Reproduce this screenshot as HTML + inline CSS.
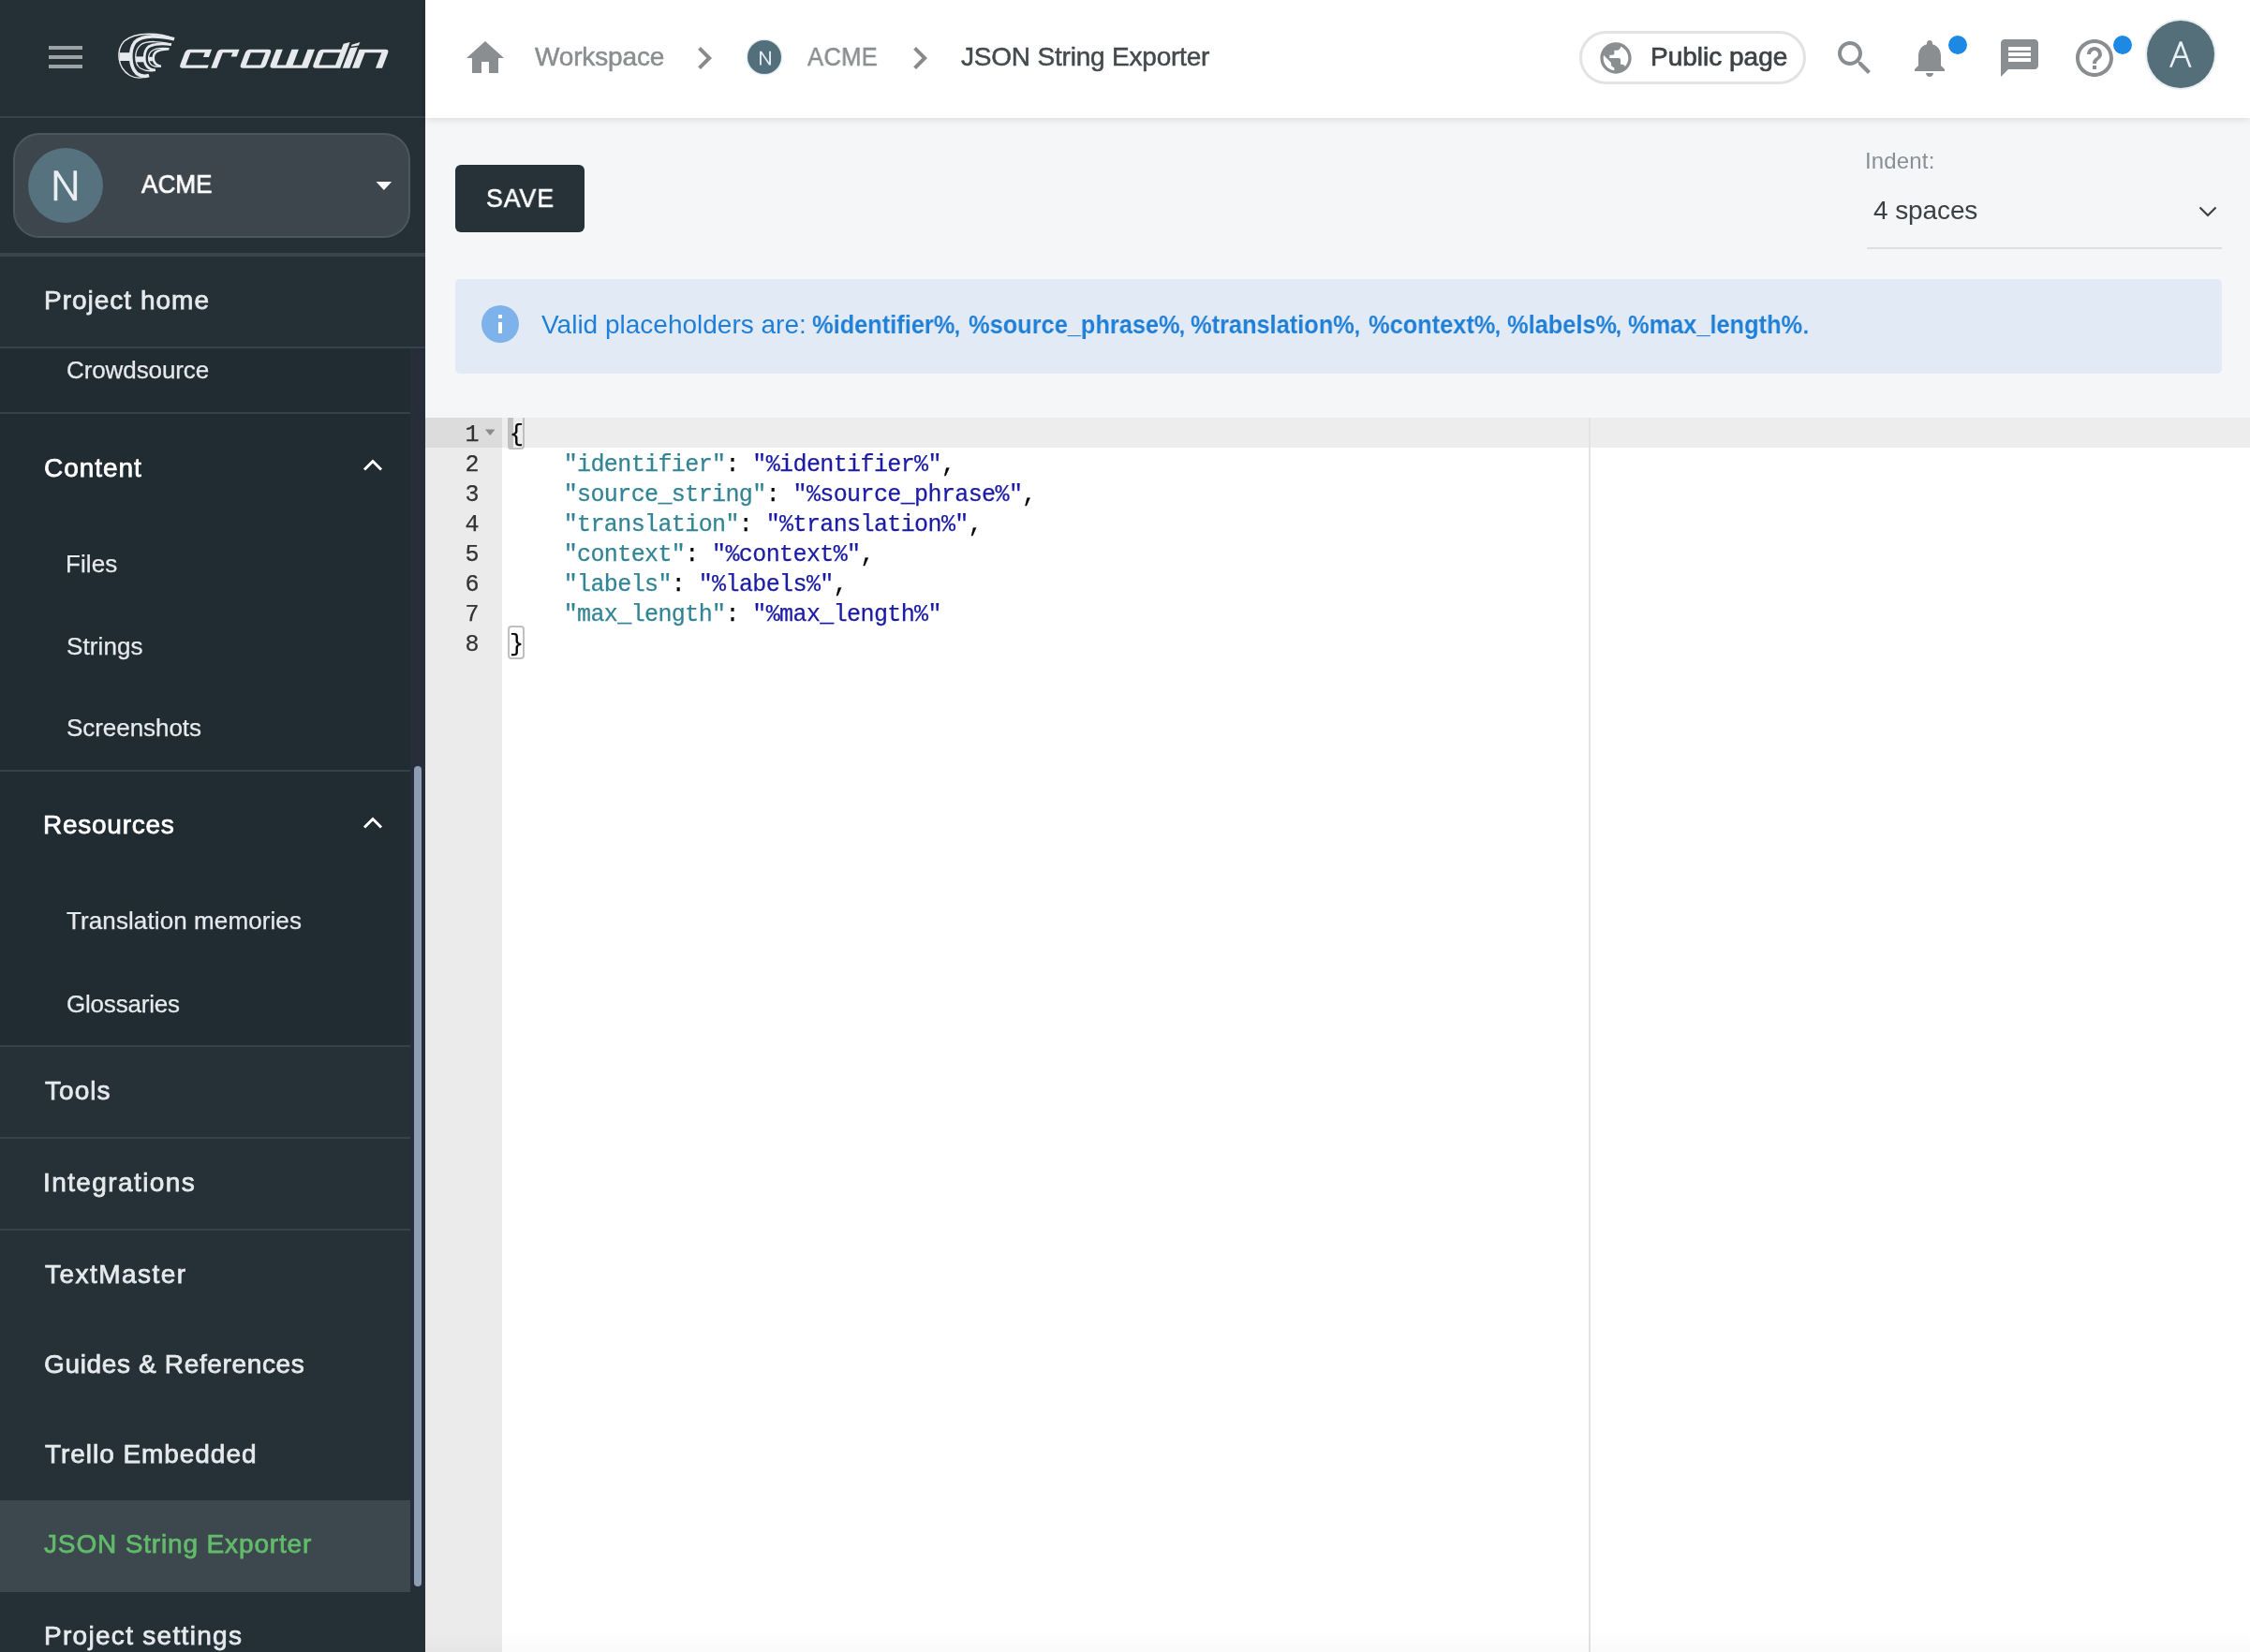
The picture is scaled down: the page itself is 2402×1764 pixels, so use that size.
<!DOCTYPE html>
<html><head><meta charset="utf-8"><title>JSON String Exporter</title>
<style>
html,body{margin:0;padding:0;width:2402px;height:1764px;overflow:hidden;background:#f4f6f8}
.r{position:absolute;box-sizing:content-box}
.t{position:absolute;white-space:nowrap;font-family:"Liberation Sans", sans-serif;will-change:transform}
.t b{font-weight:bold}
.m{position:absolute;white-space:pre;will-change:transform;font-family:"Liberation Mono", monospace;font-size:25px;line-height:32px;height:32px;letter-spacing:-0.6px;padding-top:2.5px;-webkit-text-stroke:0.25px currentColor}
.m span{-webkit-text-stroke:0.25px currentColor}
</style></head><body>
<div class="r" style="left:0px;top:0px;width:454px;height:1764px;background:#242f36;"></div>
<div class="r" style="left:52px;top:49px;width:36px;height:4px;background:#9aa3a7;"></div>
<div class="r" style="left:52px;top:59px;width:36px;height:4px;background:#9aa3a7;"></div>
<div class="r" style="left:52px;top:69px;width:36px;height:4px;background:#9aa3a7;"></div>
<svg class="r" style="left:0;top:0" width="454" height="124" viewBox="0 0 454 124">
<g fill="none" stroke="#e6eaec" stroke-linecap="butt">
 <path d="M186,41.5 C172,35 145,33 132.5,44 C124,53 124.5,72 138.5,80.5 C146,84.5 154,83 159,80.5" stroke-width="1.4"/>
 <path d="M186,41.8 C170,38 152,37 144,45 C138,53 138,71 146,78.5 C151,82 156,81.5 159,80.5" stroke-width="3.7"/>
 <path d="M183,47.2 C172,44 156,43 150,48 C143,54 143,68 150,73 C155,76 160,76 164,75.5" stroke-width="1.3"/>
 <path d="M183,47.7 C175,46.5 163.5,46.5 158.5,50 C152.9,55 152.9,67 157.5,71.5 C160,74 163,74.8 166,74.8" stroke-width="2.8"/>
 <path d="M180.4,51.7 C174,51 166,51 162,54.5 C157.5,58 157.5,66 162,69.5 C165,71.5 169,71.5 172,70.5" stroke-width="1.3"/>
 <path d="M180.4,52.2 C175,52.5 169.5,53 166.5,55.5 C162.8,58.5 162.8,65.5 166.5,68.5 C168.5,70 170.5,70.8 172,70.8" stroke-width="2.4"/>
</g>
<g fill="#e6eaec">
 <rect x="127.5" y="56.2" width="12" height="8.8"/>
 <rect x="145" y="60.4" width="8" height="5.9"/>
 <rect x="158.5" y="60.8" width="4.4" height="4.5"/>
</g>
<g fill="#e6eaec" fill-rule="evenodd" transform="matrix(1 0 -0.38 1 27.66 0)">
 <path d="M195,52.8 H218.5 V61 H212.5 V56.2 H197 V69.4 H221.5 V72.8 H195 Q191,72.8 191,68.8 V56.8 Q191,52.8 195,52.8 Z"/>
 <path d="M229,52.8 H248 V60.5 H242 V56.2 H231.5 V72.8 H225.3 V56.5 Q225.3,52.8 229,52.8 Z"/>
 <path d="M259.5,52.8 H278.8 Q282.8,52.8 282.8,56.8 V68.8 Q282.8,72.8 278.8,72.8 H259.5 Q255.5,72.8 255.5,68.8 V56.8 Q255.5,52.8 259.5,52.8 Z M261.5,56.2 V69.4 H277 V56.2 Z"/>
 <path d="M287.3,52.8 H294.2 V69.4 H303.8 V52.8 H311.3 V69.4 H320.9 V52.8 H328.4 V72.8 H291.3 Q287.3,72.8 287.3,68.8 Z"/>
 <path d="M337.1,52.8 H356.8 V46.7 L363.1,45 V72.8 H337.1 Q333.1,72.8 333.1,68.8 V56.8 Q333.1,52.8 337.1,52.8 Z M339.1,56.2 V69.4 H356.8 V56.2 Z"/>
 <path d="M365.7,72.8 V51.3 L373.3,50.3 V72.8 Z"/>
 <path d="M366,49.8 L373.8,48.6 V45 L366,47.7 Z"/>
 <path d="M376,72.8 V52.8 H404 Q408,52.8 408,56.8 V72.8 H401 V56.2 H383.3 V72.8 Z"/>
</g>
</svg>
<div class="r" style="left:0px;top:124px;width:454px;height:2px;background:#35424a;"></div>
<div class="r" style="left:14px;top:142px;width:420px;height:108px;border:2px solid #4b575e;border-radius:28px;background:#3d464d"></div>
<div class="r" style="left:30px;top:158px;width:80px;height:80px;border-radius:50%;background:#56727f"></div>
<svg class="r" style="left:50px;top:175px" width="40" height="45" viewBox="50 175 40 45"><path fill="#e8eef1" d="M57.6 182.3 H61.3 V214.3 H57.6 Z M78.4 182.3 H82.1 V214.3 H78.4 Z M57.6 182.3 H61.6 L82.1 214.3 H78.1 Z"/></svg>
<div class="t" style="left:151px;top:183.20px;font-size:28px;line-height:28px;color:#ffffff;font-weight:normal;letter-spacing:0.2px;-webkit-text-stroke:0.7px #ffffff;transform:scaleX(0.927);transform-origin:0 0;">ACME</div>
<svg class="r" style="left:401px;top:194px" width="18" height="10" viewBox="0 0 18 10"><path d="M0.5 0 H17.2 L8.85 9 Z" fill="#fff"/></svg>
<div class="r" style="left:0px;top:270px;width:454px;height:4px;background:#38454d;"></div>
<div class="t" style="left:47px;top:307.20px;font-size:28px;line-height:28px;color:#e6eaed;font-weight:normal;letter-spacing:1.0px;-webkit-text-stroke:0.75px #e6eaed;">Project home</div>
<div class="r" style="left:0px;top:370px;width:454px;height:2px;background:#35424a;"></div>
<div class="r" style="left:0px;top:372px;width:438px;height:1326px;background:#212b32;"></div>
<div class="r" style="left:0px;top:1118px;width:438px;height:580px;background:#253037;"></div>
<div class="r" style="left:438px;top:372px;width:16px;height:1326px;background:#272e39;"></div>
<div class="r" style="left:442px;top:818px;width:8px;height:876px;background:#8d9db3;border-radius:4px"></div>
<div class="t" style="left:71px;top:381.90px;font-size:26px;line-height:26px;color:#e6eaed;font-weight:normal;letter-spacing:-0.1px;-webkit-text-stroke:0.25px #e6eaed;">Crowdsource</div>
<div class="r" style="left:0px;top:440px;width:438px;height:2px;background:#35424a;"></div>
<div class="t" style="left:46.5px;top:486.20px;font-size:28px;line-height:28px;color:#ffffff;font-weight:normal;letter-spacing:0.95px;-webkit-text-stroke:0.75px #ffffff;">Content</div>
<svg class="r" style="left:386px;top:488px" width="24" height="16" viewBox="0 0 24 16"><path d="M3 13.5 L12 4.5 L21 13.5" fill="none" stroke="#fff" stroke-width="3"/></svg>
<div class="t" style="left:70px;top:589.40px;font-size:26px;line-height:26px;color:#e6eaed;font-weight:normal;letter-spacing:0.1px;-webkit-text-stroke:0.25px #e6eaed;">Files</div>
<div class="t" style="left:71px;top:676.90px;font-size:26px;line-height:26px;color:#e6eaed;font-weight:normal;letter-spacing:0.1px;-webkit-text-stroke:0.25px #e6eaed;">Strings</div>
<div class="t" style="left:71px;top:764.40px;font-size:26px;line-height:26px;color:#e6eaed;font-weight:normal;letter-spacing:-0.05px;-webkit-text-stroke:0.25px #e6eaed;">Screenshots</div>
<div class="r" style="left:0px;top:822px;width:438px;height:2px;background:#35424a;"></div>
<div class="t" style="left:46px;top:867.20px;font-size:28px;line-height:28px;color:#ffffff;font-weight:normal;letter-spacing:0.75px;-webkit-text-stroke:0.75px #ffffff;">Resources</div>
<svg class="r" style="left:386px;top:870px" width="24" height="16" viewBox="0 0 24 16"><path d="M3 13.5 L12 4.5 L21 13.5" fill="none" stroke="#fff" stroke-width="3"/></svg>
<div class="t" style="left:71px;top:970.40px;font-size:26px;line-height:26px;color:#e6eaed;font-weight:normal;letter-spacing:0.1px;-webkit-text-stroke:0.25px #e6eaed;">Translation memories</div>
<div class="t" style="left:71px;top:1058.90px;font-size:26px;line-height:26px;color:#e6eaed;font-weight:normal;letter-spacing:-0.2px;-webkit-text-stroke:0.25px #e6eaed;">Glossaries</div>
<div class="r" style="left:0px;top:1116px;width:438px;height:2px;background:#35424a;"></div>
<div class="t" style="left:47.5px;top:1150.70px;font-size:28px;line-height:28px;color:#e6eaed;font-weight:normal;letter-spacing:1.05px;-webkit-text-stroke:0.75px #e6eaed;">Tools</div>
<div class="r" style="left:0px;top:1214px;width:438px;height:2px;background:#35424a;"></div>
<div class="t" style="left:46px;top:1249.20px;font-size:28px;line-height:28px;color:#e6eaed;font-weight:normal;letter-spacing:1.4px;-webkit-text-stroke:0.75px #e6eaed;">Integrations</div>
<div class="r" style="left:0px;top:1312px;width:438px;height:2px;background:#35424a;"></div>
<div class="t" style="left:47.5px;top:1346.70px;font-size:28px;line-height:28px;color:#e6eaed;font-weight:normal;letter-spacing:1.45px;-webkit-text-stroke:0.75px #e6eaed;">TextMaster</div>
<div class="t" style="left:46.5px;top:1442.70px;font-size:28px;line-height:28px;color:#e6eaed;font-weight:normal;letter-spacing:0.65px;-webkit-text-stroke:0.75px #e6eaed;">Guides &amp; References</div>
<div class="t" style="left:47.5px;top:1538.70px;font-size:28px;line-height:28px;color:#e6eaed;font-weight:normal;letter-spacing:0.95px;-webkit-text-stroke:0.75px #e6eaed;">Trello Embedded</div>
<div class="r" style="left:0px;top:1602px;width:438px;height:98px;background:#3d474e;"></div>
<div class="t" style="left:46.5px;top:1635.20px;font-size:28px;line-height:28px;color:#62bb6a;font-weight:normal;letter-spacing:0.85px;-webkit-text-stroke:0.75px #62bb6a;">JSON String Exporter</div>
<div class="t" style="left:46.5px;top:1733.20px;font-size:28px;line-height:28px;color:#e6eaed;font-weight:normal;letter-spacing:1.3px;-webkit-text-stroke:0.75px #e6eaed;">Project settings</div>
<div class="r" style="left:454px;top:0px;width:1948px;height:1764px;background:#f4f6f8;"></div>
<div class="r" style="left:454px;top:0;width:1948px;height:126px;background:#fff;box-shadow:0 2px 8px rgba(0,0,0,0.10)"></div>
<svg class="r" style="left:494px;top:38px" width="48" height="48" viewBox="0 0 24 24"><path d="M10 20v-6h4v6h5v-8h3L12 3 2 12h3v8z" fill="#8a8e90"/></svg>
<div class="t" style="left:571px;top:47.20px;font-size:28px;line-height:28px;color:#8a8e90;font-weight:normal;letter-spacing:-0.15px;-webkit-text-stroke:0.5px #8a8e90;">Workspace</div>
<svg class="r" style="left:728px;top:38px" width="48" height="48" viewBox="0 0 24 24"><path d="M10 6L8.59 7.41 13.17 12l-4.58 4.59L10 18l6-6z" fill="#8a8a8a"/></svg>
<div class="r" style="left:798px;top:43px;width:36px;height:36px;border-radius:50%;background:#546f7c;box-shadow:0 0 0 1.5px #e4edf0"></div>
<svg class="r" style="left:805px;top:50px" width="25" height="25" viewBox="805 50 25 25"><path fill="#e3edf3" d="M811 54.8 H812.9 V69.5 H811 Z M821.1 54.8 H823 V69.5 H821.1 Z M811 54.8 H813.1 L823 69.5 H820.9 Z"/></svg>
<div class="t" style="left:862px;top:47.20px;font-size:28px;line-height:28px;color:#8a8e90;font-weight:normal;letter-spacing:0.3px;-webkit-text-stroke:0.5px #8a8e90;transform:scaleX(0.915);transform-origin:0 0;">ACME</div>
<svg class="r" style="left:957.5px;top:38px" width="48" height="48" viewBox="0 0 24 24"><path d="M10 6L8.59 7.41 13.17 12l-4.58 4.59L10 18l6-6z" fill="#8a8a8a"/></svg>
<div class="t" style="left:1026px;top:47.20px;font-size:28px;line-height:28px;color:#43494d;font-weight:normal;letter-spacing:-0.2px;-webkit-text-stroke:0.5px #43494d;">JSON String Exporter</div>
<div class="r" style="left:1685.5px;top:32.5px;width:236px;height:51px;border:3px solid #e3e3e3;border-radius:30px;background:#fff"></div>
<svg class="r" style="left:1705px;top:42px" width="40" height="40" viewBox="0 0 24 24"><path fill="#8a8e90" d="M12 2C6.48 2 2 6.48 2 12s4.48 10 10 10 10-4.48 10-10S17.52 2 12 2zm-1 17.93c-3.95-.49-7-3.85-7-7.93 0-.62.08-1.21.21-1.79L9 15v1c0 1.1.9 2 2 2v1.93zm6.9-2.54c-.26-.81-1-1.39-1.9-1.39h-1v-3c0-.55-.45-1-1-1H8v-2h2c.55 0 1-.45 1-1V7h2c1.1 0 2-.9 2-2v-.41c2.93 1.19 5 4.06 5 7.41 0 2.08-.8 3.97-2.1 5.39z"/></svg>
<div class="t" style="left:1762px;top:47.20px;font-size:28px;line-height:28px;color:#3d4247;font-weight:normal;letter-spacing:0px;-webkit-text-stroke:0.7px #3d4247;">Public page</div>
<svg class="r" style="left:1956px;top:38px" width="48" height="48" viewBox="0 0 24 24"><path d="M15.5 14h-.79l-.28-.27C15.41 12.59 16 11.11 16 9.5 16 5.91 13.09 3 9.5 3S3 5.91 3 9.5 5.91 16 9.5 16c1.61 0 3.09-.59 4.23-1.57l.27.28v.79l5 4.99L20.49 19l-4.99-5zm-6 0C7.01 14 5 11.99 5 9.5S7.01 5 9.5 5 14 7.01 14 9.5 11.99 14 9.5 14z" fill="#8a8e90"/></svg>
<svg class="r" style="left:2036px;top:38px" width="48" height="48" viewBox="0 0 24 24"><path d="M12 22c1.1 0 2-.9 2-2h-4c0 1.1.89 2 2 2zm6-6v-5c0-3.07-1.64-5.64-4.5-6.32V4c0-.83-.67-1.5-1.5-1.5s-1.5.67-1.5 1.5v.68C7.63 5.36 6 7.92 6 11v5l-2 2v1h16v-1l-2-2z" fill="#8a8e90"/></svg>
<div class="r" style="left:2080px;top:38px;width:20px;height:20px;border-radius:50%;background:#1e88e5"></div>
<svg class="r" style="left:2132px;top:38px" width="48" height="48" viewBox="0 0 24 24"><path d="M20 2H4c-1.1 0-1.99.9-1.99 2L2 22l4-4h14c1.1 0 2-.9 2-2V4c0-1.1-.9-2-2-2zm-2 12H6v-2h12v2zm0-3H6V9h12v2zm0-3H6V6h12v2z" fill="#8a8e90"/></svg>
<svg class="r" style="left:2212px;top:38px" width="48" height="48" viewBox="0 0 24 24"><path d="M11 18h2v-2h-2v2zm1-16C6.48 2 2 6.48 2 12s4.48 10 10 10 10-4.48 10-10S17.52 2 12 2zm0 18c-4.41 0-8-3.59-8-8s3.59-8 8-8 8 3.59 8 8-3.59 8-8 8zm0-14c-2.21 0-4 1.79-4 4h2c0-1.1.9-2 2-2s2 .9 2 2c0 2-3 1.75-3 5h2c0-2.25 3-2.5 3-5 0-2.21-1.79-4-4-4z" fill="#8a8e90"/></svg>
<div class="r" style="left:2256px;top:38px;width:20px;height:20px;border-radius:50%;background:#1e88e5"></div>
<div class="r" style="left:2292px;top:22px;width:72px;height:72px;border-radius:50%;background:#546e7a;box-shadow:0 0 0 2px #e6eef2"></div>
<svg class="r" style="left:2300px;top:35px" width="50" height="45" viewBox="2300 35 50 45"><path fill="#e6f0f5" d="M2316 71.7 L2326.9 44.2 H2329.3 L2339.6 71.7 H2336.9 L2328.1 48.6 L2318.7 71.7 Z M2320.6 59.6 H2335.4 V62 H2320.6 Z"/></svg>
<div class="r" style="left:486px;top:176px;width:138px;height:72px;border-radius:6px;background:#263238"></div>
<div class="t" style="left:519px;top:198.20px;font-size:28px;line-height:28px;color:#ffffff;font-weight:normal;letter-spacing:1.0px;-webkit-text-stroke:0.6px #ffffff;transform:scaleX(0.952);transform-origin:0 0;">SAVE</div>
<div class="t" style="left:1991px;top:159.60px;font-size:24px;line-height:24px;color:#8a8f93;font-weight:normal;letter-spacing:0.15px;">Indent:</div>
<div class="t" style="left:2000px;top:211.20px;font-size:28px;line-height:28px;color:#3c4043;font-weight:normal;letter-spacing:-0.1px;">4 spaces</div>
<svg class="r" style="left:2344px;top:214px" width="26" height="24" viewBox="0 0 26 24"><path d="M4.5 7.5 L13 16 L21.5 7.5" fill="none" stroke="#3c4043" stroke-width="2.2"/></svg>
<div class="r" style="left:1993px;top:264px;width:379px;height:2px;background:#dcdee0;"></div>
<div class="r" style="left:486px;top:298px;width:1886px;height:101px;border-radius:5px;background:#e2ebf5"></div>
<div class="r" style="left:514px;top:326px;width:40px;height:40px;border-radius:50%;background:#7db3ea"></div>
<div class="r" style="left:532px;top:336px;width:4.2px;height:4px;background:#fff;"></div>
<div class="r" style="left:532px;top:344px;width:4.2px;height:12px;background:#fff;"></div>
<div class="t" style="left:578px;top:333.20px;font-size:28px;line-height:28px;color:#1e7fd8;font-weight:normal;letter-spacing:0px;">Valid placeholders are:</div>
<div class="t" style="left:866.7px;top:333.20px;font-size:28px;line-height:28px;color:#1e7fd8;font-weight:bold;letter-spacing:0px;transform:scaleX(0.906);transform-origin:0 0;">%identifier%</div>
<div class="t" style="left:1017.5px;top:333.20px;font-size:28px;line-height:28px;color:#1e7fd8;font-weight:normal;letter-spacing:0px;-webkit-text-stroke:0.4px #1e7fd8;">,</div>
<div class="t" style="left:1033.8px;top:333.20px;font-size:28px;line-height:28px;color:#1e7fd8;font-weight:bold;letter-spacing:0px;transform:scaleX(0.906);transform-origin:0 0;">%source_phrase%</div>
<div class="t" style="left:1257.5px;top:333.20px;font-size:28px;line-height:28px;color:#1e7fd8;font-weight:normal;letter-spacing:0px;-webkit-text-stroke:0.4px #1e7fd8;">,</div>
<div class="t" style="left:1271.1px;top:333.20px;font-size:28px;line-height:28px;color:#1e7fd8;font-weight:bold;letter-spacing:0px;transform:scaleX(0.906);transform-origin:0 0;">%translation%</div>
<div class="t" style="left:1445.3px;top:333.20px;font-size:28px;line-height:28px;color:#1e7fd8;font-weight:normal;letter-spacing:0px;-webkit-text-stroke:0.4px #1e7fd8;">,</div>
<div class="t" style="left:1460.7px;top:333.20px;font-size:28px;line-height:28px;color:#1e7fd8;font-weight:bold;letter-spacing:0px;transform:scaleX(0.906);transform-origin:0 0;">%context%</div>
<div class="t" style="left:1594.8px;top:333.20px;font-size:28px;line-height:28px;color:#1e7fd8;font-weight:normal;letter-spacing:0px;-webkit-text-stroke:0.4px #1e7fd8;">,</div>
<div class="t" style="left:1608.6px;top:333.20px;font-size:28px;line-height:28px;color:#1e7fd8;font-weight:bold;letter-spacing:0px;transform:scaleX(0.906);transform-origin:0 0;">%labels%</div>
<div class="t" style="left:1723.8px;top:333.20px;font-size:28px;line-height:28px;color:#1e7fd8;font-weight:normal;letter-spacing:0px;-webkit-text-stroke:0.4px #1e7fd8;">,</div>
<div class="t" style="left:1737.5px;top:333.20px;font-size:28px;line-height:28px;color:#1e7fd8;font-weight:bold;letter-spacing:0px;transform:scaleX(0.906);transform-origin:0 0;">%max_length%</div>
<div class="t" style="left:1923.8px;top:333.20px;font-size:28px;line-height:28px;color:#1e7fd8;font-weight:normal;letter-spacing:0px;-webkit-text-stroke:0.4px #1e7fd8;">.</div>
<div class="r" style="left:454px;top:446px;width:1948px;height:1318px;background:#ffffff;"></div>
<div class="r" style="left:454px;top:446px;width:82px;height:1318px;background:#ebebeb;"></div>
<div class="r" style="left:454px;top:446px;width:82px;height:32px;background:#dcdcdc;"></div>
<div class="r" style="left:536px;top:446px;width:1866px;height:32px;background:#ededed;"></div>
<div class="r" style="left:1696px;top:446px;width:2px;height:1318px;background:#e3e3e3;"></div>
<div class="r" style="left:542px;top:446px;width:6px;height:34px;background:#c2c2c2;border-radius:0 0 0 4px"></div>
<div class="r" style="left:542px;top:446px;width:13.5px;height:32px;border:2px solid #c0c0c0;border-top:none;border-radius:0 0 4px 4px"></div>
<svg class="r" style="left:518px;top:458px" width="11" height="8" viewBox="0 0 11 8"><path d="M0 0.5 H10.5 L5.25 7 Z" fill="#8a8a8a"/></svg>
<div class="m" style="left:454px;top:446px;width:57px;text-align:right;color:#333">1</div>
<div class="m" style="left:544px;top:446px"><span style="color:#000">{</span></div>
<div class="m" style="left:454px;top:478px;width:57px;text-align:right;color:#333">2</div>
<div class="m" style="left:544px;top:478px"><span style="color:#000">&nbsp;&nbsp;&nbsp;&nbsp;</span><span style="color:#318495">"identifier"</span><span style="color:#000">:&nbsp;</span><span style="color:#1a1aa6">"%identifier%"</span><span style="color:#000">,</span></div>
<div class="m" style="left:454px;top:510px;width:57px;text-align:right;color:#333">3</div>
<div class="m" style="left:544px;top:510px"><span style="color:#000">&nbsp;&nbsp;&nbsp;&nbsp;</span><span style="color:#318495">"source_string"</span><span style="color:#000">:&nbsp;</span><span style="color:#1a1aa6">"%source_phrase%"</span><span style="color:#000">,</span></div>
<div class="m" style="left:454px;top:542px;width:57px;text-align:right;color:#333">4</div>
<div class="m" style="left:544px;top:542px"><span style="color:#000">&nbsp;&nbsp;&nbsp;&nbsp;</span><span style="color:#318495">"translation"</span><span style="color:#000">:&nbsp;</span><span style="color:#1a1aa6">"%translation%"</span><span style="color:#000">,</span></div>
<div class="m" style="left:454px;top:574px;width:57px;text-align:right;color:#333">5</div>
<div class="m" style="left:544px;top:574px"><span style="color:#000">&nbsp;&nbsp;&nbsp;&nbsp;</span><span style="color:#318495">"context"</span><span style="color:#000">:&nbsp;</span><span style="color:#1a1aa6">"%context%"</span><span style="color:#000">,</span></div>
<div class="m" style="left:454px;top:606px;width:57px;text-align:right;color:#333">6</div>
<div class="m" style="left:544px;top:606px"><span style="color:#000">&nbsp;&nbsp;&nbsp;&nbsp;</span><span style="color:#318495">"labels"</span><span style="color:#000">:&nbsp;</span><span style="color:#1a1aa6">"%labels%"</span><span style="color:#000">,</span></div>
<div class="m" style="left:454px;top:638px;width:57px;text-align:right;color:#333">7</div>
<div class="m" style="left:544px;top:638px"><span style="color:#000">&nbsp;&nbsp;&nbsp;&nbsp;</span><span style="color:#318495">"max_length"</span><span style="color:#000">:&nbsp;</span><span style="color:#1a1aa6">"%max_length%"</span></div>
<div class="m" style="left:454px;top:670px;width:57px;text-align:right;color:#333">8</div>
<div class="m" style="left:544px;top:670px"><span style="color:#000">}</span></div>
<div class="r" style="left:542px;top:668px;width:13.5px;height:32px;border:2px solid #c0c0c0;border-radius:4px"></div>
<div class="r" style="left:454px;top:1740px;width:1948px;height:24px;background:linear-gradient(rgba(0,0,0,0),rgba(0,0,0,0.02))"></div>
</body></html>
